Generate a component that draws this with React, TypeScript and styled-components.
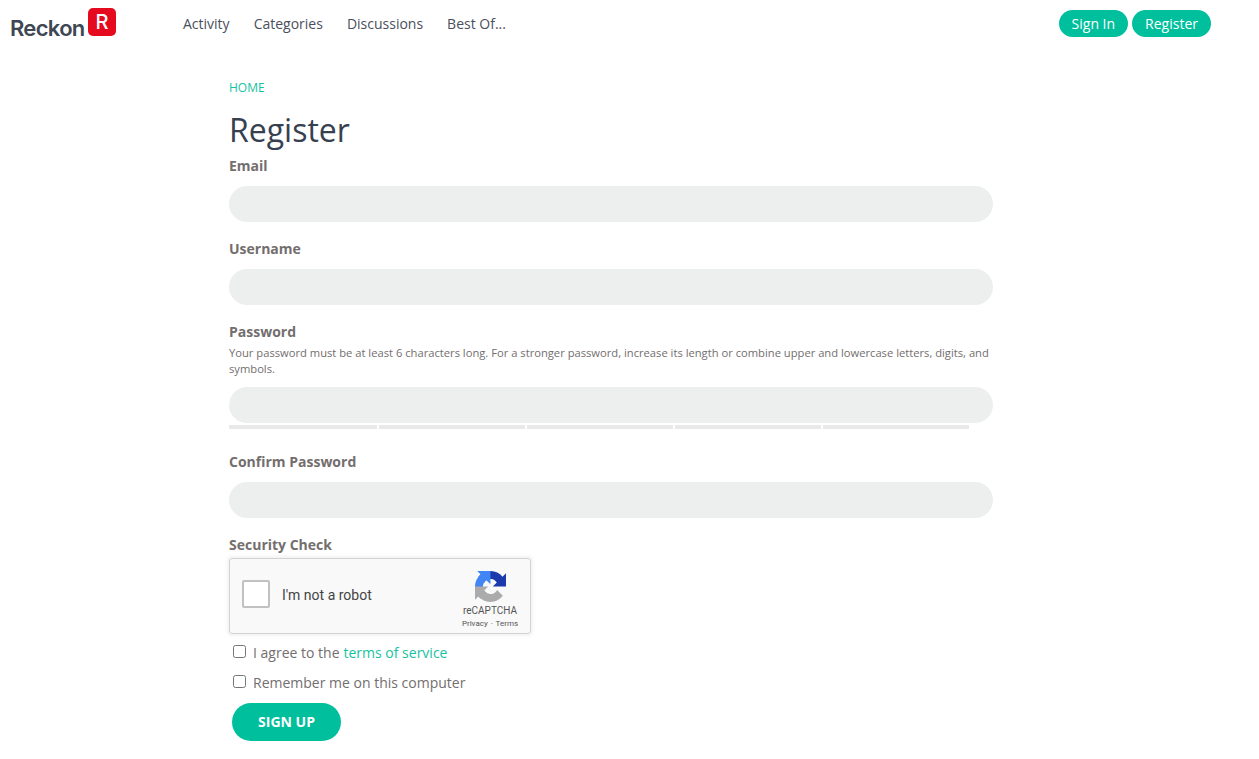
import React from "react";
import styled, { createGlobalStyle } from "styled-components";

const Global = createGlobalStyle`
  html, body { margin: 0; padding: 0; background: #fff; }
  body { font-family: "Open Sans", "Liberation Sans", sans-serif; color: #736e6e; }
  * { box-sizing: border-box; }
`;

const Header = styled.header`
  display: flex;
  align-items: center;
  height: 48px;
  padding: 0 48px 0 10px;
`;
const Logo = styled.a`
  display: flex;
  align-items: flex-start;
  width: 173px;
  height: 30px;
`;
const LogoWord = styled.span`
  font-family: Inter, sans-serif;
  font-weight: 600;
  font-size: 22px;
  line-height: 30px;
  letter-spacing: -0.7px;
  color: #3e4855;
  margin-top: 4px;
  width: 78px;
`;
const LogoMark = styled.span`
  display: flex;
  align-items: center;
  justify-content: center;
  width: 28px;
  height: 28px;
  margin-top: -1px;
  border-radius: 5px;
  background: #e50a1e;
  color: #fff;
  font-family: Inter, sans-serif;
  font-weight: 500;
  font-size: 20px;
`;
const Nav = styled.nav`
  display: flex;
  gap: 24px;
  flex: 1;
`;
const NavLink = styled.a`
  font-size: 14px;
  line-height: 20px;
  color: #4b4f5c;
`;
const Actions = styled.div`
  display: flex;
  gap: 4px;
  margin-top: -1px;
`;
const Pill = styled.a`
  display: flex;
  align-items: center;
  height: 27px;
  padding: 0 13px;
  border-radius: 14px;
  background: #00bf9c;
  color: #fff;
  font-size: 14px;
`;
const Main = styled.main`
  width: 764px;
  margin-left: 229px;
  padding-top: 32px;
`;
const Crumb = styled.a`
  display: block;
  font-size: 12px;
  line-height: 16px;
  color: #16c2a1;
`;
const Title = styled.h1`
  margin: 11px 0 0;
  font-size: 32px;
  font-weight: 400;
  line-height: 46px;
  color: #36404f;
`;
const Field = styled.div`
  margin-bottom: 14px;
`;
const Label = styled.label`
  display: block;
  font-size: 14px;
  font-weight: 700;
  line-height: 26px;
  height: 26px;
  color: #736e6e;
`;
const Hint = styled.p`
  margin: 0 0 10px;
  font-size: 11.2px;
  line-height: 16px;
  color: #736e6e;
`;
const Input = styled.input<{ $gap?: number }>`
  display: block;
  width: 100%;
  height: 36px;
  margin-top: ${(p) => p.$gap ?? 7}px;
  border: 0;
  outline: 0;
  border-radius: 18px;
  background: #edefee;
`;
const Meter = styled.div`
  display: flex;
  gap: 2px;
  width: 740px;
  margin-top: 2px;
  margin-bottom: 20px;
`;
const MeterBar = styled.span`
  flex: 1;
  height: 4px;
  background: #e9e9e9;
  &:first-child {
    flex: 0 0 148px;
  }
`;
const Captcha = styled.div`
  display: flex;
  align-items: center;
  width: 302px;
  height: 76px;
  padding: 0 12px;
  background: #f9f9f9;
  border: 1px solid #d3d3d3;
  border-radius: 3px;
  box-shadow: 0 0 4px 1px rgba(0, 0, 0, 0.08);
`;
const CaptchaBox = styled.span`
  width: 28px;
  height: 28px;
  margin-bottom: 4px;
  background: #fff;
  border: 2px solid #c1c1c1;
  border-radius: 2px;
`;
const CaptchaText = styled.span`
  margin: 0 0 2px 12px;
  flex: 1;
  font-family: Roboto, sans-serif;
  font-size: 14px;
  color: #444;
`;
const CaptchaBrand = styled.div`
  display: flex;
  flex-direction: column;
  align-items: center;
  width: 58px;
  margin: 9px -1px 0 0;
  font-family: Roboto, sans-serif;
  color: #555;
`;
const BrandName = styled.span`
  font-size: 10px;
  line-height: 12px;
  margin-top: 3px;
`;
const BrandLinks = styled.span`
  font-size: 8px;
  line-height: 12px;
  margin-top: 1px;
  white-space: nowrap;
  word-spacing: 1px;
`;
const Check = styled.label`
  display: flex;
  align-items: center;
  height: 30px;
  padding-left: 4px;
  font-size: 14px;
  color: #736e6e;
`;
const CheckList = styled.div`
  margin-top: 3px;
`;
const Box = styled.input`
  width: 13px;
  height: 13px;
  margin: 0 7px 2px 0;
  accent-color: #00bf9c;
`;
const TextLink = styled.a`
  color: #16c2a1;
  margin-left: 4px;
`;
const Submit = styled.button`
  display: block;
  width: 109px;
  height: 38px;
  margin: 6px 0 0 3px;
  padding: 0 0 2px;
  border: 0;
  border-radius: 19px;
  background: #00bf9c;
  color: #fff;
  font-family: inherit;
  font-size: 14px;
  font-weight: 700;
`;

const RecaptchaIcon = () => (
  <svg width="31" height="31" viewBox="0 0 64 64" aria-hidden="true">
    <path
      d="M64 31.955l-.033-1.37V4.687l-7.16 7.16C50.948 4.674 42.033.093 32.05.093c-10.4 0-19.622 4.96-25.458 12.64l11.736 11.86a15.55 15.55 0 0 1 4.754-5.334c2.05-1.6 4.952-2.906 8.968-2.906.485 0 .86.057 1.135.163 4.976.393 9.288 3.14 11.828 7.124l-8.307 8.308 32.27.004"
      fill="#1c3aab"
    />
    <path
      d="M31.862.002l-1.37.033H4.594l7.16 7.16C4.58 13.055 0 21.97 0 31.953c0 10.4 4.96 19.622 12.64 25.458L24.5 45.675a15.55 15.55 0 0 1-5.334-4.754c-1.6-2.05-2.906-4.952-2.906-8.968 0-.485.057-.86.163-1.135.393-4.976 3.14-9.288 7.124-11.828l8.308 8.307.004-32.27"
      fill="#4285f4"
    />
    <path
      d="M.001 31.953l.033 1.37v25.898l7.16-7.16C13.046 59.234 21.96 63.814 31.945 63.814c10.4 0 19.622-4.96 25.458-12.64l-11.736-11.86a15.55 15.55 0 0 1-4.754 5.334c-2.05 1.6-4.952 2.906-8.968 2.906-.485 0-.86-.057-1.135-.163-4.976-.393-9.288-3.14-11.828-7.124l8.307-8.308-32.27-.004"
      fill="#ababab"
    />
  </svg>
);

export default function App() {
  return (
    <>
      <Global />
      <Header>
        <Logo>
          <LogoWord>Reckon</LogoWord>
          <LogoMark>R</LogoMark>
        </Logo>
        <Nav>
          <NavLink>Activity</NavLink>
          <NavLink>Categories</NavLink>
          <NavLink>Discussions</NavLink>
          <NavLink>Best Of...</NavLink>
        </Nav>
        <Actions>
          <Pill>Sign In</Pill>
          <Pill>Register</Pill>
        </Actions>
      </Header>
      <Main>
        <Crumb>HOME</Crumb>
        <Title>Register</Title>
        <Field>
          <Label>Email</Label>
          <Input />
        </Field>
        <Field>
          <Label>Username</Label>
          <Input />
        </Field>
        <Field>
          <Label>Password</Label>
          <Hint>
            Your password must be at least 6 characters long. For a stronger password, increase its length or combine
            upper and lowercase letters, digits, and symbols.
          </Hint>
          <Input $gap={0} />
          <Meter>
            <MeterBar />
            <MeterBar />
            <MeterBar />
            <MeterBar />
            <MeterBar />
          </Meter>
        </Field>
        <Field>
          <Label>Confirm Password</Label>
          <Input />
        </Field>
        <Label>Security Check</Label>
        <Captcha>
          <CaptchaBox />
          <CaptchaText>I'm not a robot</CaptchaText>
          <CaptchaBrand>
            <RecaptchaIcon />
            <BrandName>reCAPTCHA</BrandName>
            <BrandLinks>Privacy · Terms</BrandLinks>
          </CaptchaBrand>
        </Captcha>
        <CheckList>
          <Check>
            <Box type="checkbox" />I agree to the<TextLink>terms of service</TextLink>
          </Check>
          <Check>
            <Box type="checkbox" />Remember me on this computer
          </Check>
        </CheckList>
        <Submit>SIGN UP</Submit>
      </Main>
    </>
  );
}
